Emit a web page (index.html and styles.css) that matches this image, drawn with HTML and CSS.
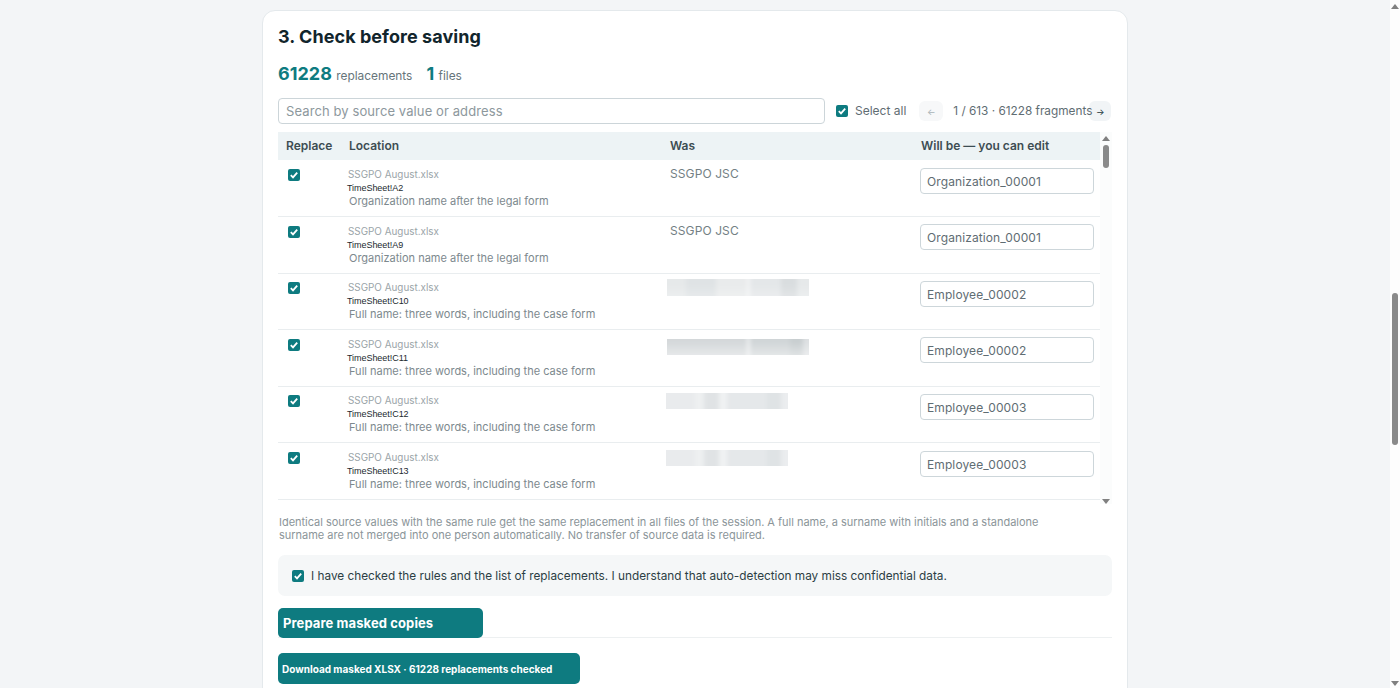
FILE: index.html
```html
<!DOCTYPE html>
<html lang="en">
<head>
<meta charset="utf-8">
<title>Check before saving</title>
<link rel="stylesheet" href="styles.css">
</head>
<body>
<div class="page">
  <main class="content">
    <section class="card">
      <h2 class="title">3. Check before saving</h2>
      <div class="stats">
        <span class="stat"><b>61228</b> replacements</span>
        <span class="stat"><b>1</b> files</span>
      </div>
      <div class="toolbar">
        <div class="search">Search by source value or address</div>
        <label class="select-all"><span class="check"><svg viewBox="0 0 12 12"><path d="M2.8 6.2 5 8.4 9.2 3.6"/></svg></span><span class="select-text">Select all</span></label>
        <div class="pager">
          <span class="page-btn muted">←</span>
          <span class="page-info">1 / 613 · 61228 fragments</span>
          <span class="page-btn next">→</span>
        </div>
      </div>
      <div class="table-wrap">
        <div class="table">
          <div class="row head">
            <span>Replace</span><span>Location</span><span>Was</span><span>Will be — you can edit</span>
          </div>
          <div class="row">
            <span class="check"><svg viewBox="0 0 12 12"><path d="M2.8 6.2 5 8.4 9.2 3.6"/></svg></span>
            <div class="loc"><div class="file">SSGPO August.xlsx</div><div class="addr">TimeSheet!A2</div><div class="desc">Organization name after the legal form</div></div>
            <div class="was">SSGPO JSC</div>
            <div class="value">Organization_00001</div>
          </div>
          <div class="row">
            <span class="check"><svg viewBox="0 0 12 12"><path d="M2.8 6.2 5 8.4 9.2 3.6"/></svg></span>
            <div class="loc"><div class="file">SSGPO August.xlsx</div><div class="addr">TimeSheet!A9</div><div class="desc">Organization name after the legal form</div></div>
            <div class="was">SSGPO JSC</div>
            <div class="value">Organization_00001</div>
          </div>
          <div class="row">
            <span class="check"><svg viewBox="0 0 12 12"><path d="M2.8 6.2 5 8.4 9.2 3.6"/></svg></span>
            <div class="loc"><div class="file">SSGPO August.xlsx</div><div class="addr">TimeSheet!C10</div><div class="desc">Full name: three words, including the case form</div></div>
            <div class="blur long"></div>
            <div class="value">Employee_00002</div>
          </div>
          <div class="row">
            <span class="check"><svg viewBox="0 0 12 12"><path d="M2.8 6.2 5 8.4 9.2 3.6"/></svg></span>
            <div class="loc"><div class="file">SSGPO August.xlsx</div><div class="addr">TimeSheet!C11</div><div class="desc">Full name: three words, including the case form</div></div>
            <div class="blur long dark"></div>
            <div class="value">Employee_00002</div>
          </div>
          <div class="row">
            <span class="check"><svg viewBox="0 0 12 12"><path d="M2.8 6.2 5 8.4 9.2 3.6"/></svg></span>
            <div class="loc"><div class="file">SSGPO August.xlsx</div><div class="addr">TimeSheet!C12</div><div class="desc">Full name: three words, including the case form</div></div>
            <div class="blur short"></div>
            <div class="value">Employee_00003</div>
          </div>
          <div class="row">
            <span class="check"><svg viewBox="0 0 12 12"><path d="M2.8 6.2 5 8.4 9.2 3.6"/></svg></span>
            <div class="loc"><div class="file">SSGPO August.xlsx</div><div class="addr">TimeSheet!C13</div><div class="desc">Full name: three words, including the case form</div></div>
            <div class="blur short"></div>
            <div class="value">Employee_00003</div>
          </div>
        </div>
        <div class="scrollbar inner">
          <span class="arrow up"></span>
          <span class="thumb"></span>
          <span class="arrow down"></span>
        </div>
      </div>
      <p class="note">Identical source values with the same rule get the same replacement in all files of the session. A full name, a surname with initials and a standalone surname are not merged into one person automatically. No transfer of source data is required.</p>
      <label class="consent"><span class="check"><svg viewBox="0 0 12 12"><path d="M2.8 6.2 5 8.4 9.2 3.6"/></svg></span>I have checked the rules and the list of replacements. I understand that auto-detection may miss confidential data.</label>
      <div class="prepare-row"><button class="btn prepare">Prepare masked copies</button></div>
      <button class="btn download">Download masked XLSX · 61228 replacements checked</button>
    </section>
  </main>
  <div class="scrollbar outer">
    <span class="arrow up"></span>
    <span class="thumb"></span>
    <span class="arrow down"></span>
  </div>
</div>
</body>
</html>
```
FILE: styles.css
```css
* { box-sizing: border-box; }
html, body { margin: 0; height: 100%; overflow: hidden; }
body { font-family: Inter, "Liberation Sans", sans-serif; color: #15262c; background: #f3f5f7; }
.page { display: flex; height: 688px; overflow: hidden; }
.content { flex: 1; min-width: 0; padding-top: 10px; }
.card {
  width: 866px; margin: 0 auto; height: 720px; background: #fff;
  border: 1px solid #e4e9ec; border-radius: 13px; padding: 0 15px;
}
.title { margin: 0; padding-top: 14px; font-size: 18px; line-height: 24px; font-weight: 700; letter-spacing: .05px; color: #11252c; }
.stats { display: flex; gap: 14px; margin-top: 14px; height: 24px; align-items: baseline; font-size: 11.9px; color: #66757b; }
.stat b { font-size: 18px; font-weight: 700; color: #0e7b80; margin-right: 1px; }
.toolbar { display: flex; align-items: center; height: 26px; margin-top: 11px; }
.search {
  width: 547px; height: 26px; border: 1px solid #ccd5d9; border-radius: 4px;
  padding: 0 7px; font-size: 13px; line-height: 25px; letter-spacing: .1px; color: #8d989d;
}
.check { display: block; width: 12px; height: 12px; border-radius: 2px; background: #0e7b80; flex: none; }
.check svg { display: block; width: 12px; height: 12px; fill: none; stroke: #fff; stroke-width: 1.8; }
.select-all { display: flex; align-items: center; gap: 7px; margin-left: 11px; font-size: 12px; color: #5f6d73; }
.select-text { margin-top: -2px; }
.pager { display: flex; align-items: center; margin-left: 13px; font-size: 11.8px; color: #5f6d73; }
.page-btn { display: flex; align-items: center; justify-content: center; height: 20px; border-radius: 6px; background: #f1f4f6; font-size: 9px; color: #20343a; }
.page-btn.muted { width: 24px; color: #a9b3b7; background: #f7f8f9; }
.page-info { margin-left: 9px; width: 137px; padding-left: 1px; white-space: nowrap; position: relative; z-index: 1; }
.page-btn.next { width: 22px; }
.table-wrap { display: flex; height: 372px; margin-top: 8px; }
.table { flex: 1; min-width: 0; }
.row {
  display: grid; grid-template-columns: 63px 321px 251px 174px;
  height: 56.6px; padding-left: 8px; border-bottom: 1px solid #e9edef;
  padding-top: 8.6px; font-size: 12px;
}
.row.head {
  height: 28.4px; padding-top: 0; padding-bottom: 2px; align-items: center; background: #edf3f5; border: 0;
  font-weight: 600; font-size: 12px; color: #3d4d53;
}
.row > .check { margin-left: 2px; }
.loc { margin-left: -1px; margin-top: -1px; }
.file { font-size: 9.9px; line-height: 13px; color: #9aa4a8; }
.addr { font-size: 9px; line-height: 14px; color: #1c2a30; font-family: "Liberation Sans", sans-serif; letter-spacing: -.05px; margin-left: -1px; }
.desc { font-size: 11px; line-height: 13px; color: #7d898e; margin-left: 1px; }
.was { font-size: 12px; line-height: 12px; color: #737f84; letter-spacing: .1px; margin-top: -1px; }
.value {
  height: 26px; width: 174px; margin-left: -1px; margin-top: -1.4px; border: 1px solid #cdd6da; border-radius: 4px;
  padding: 0 6px; font-size: 12px; line-height: 25px; color: #5f6d73; letter-spacing: .1px;
}
.blur { position: relative; overflow: hidden; height: 17px; margin-left: -3px; margin-top: -3px; }
.blur::before { content: ""; position: absolute; inset: -6px; filter: blur(2px); }
.blur.long { width: 142px; }
.blur.long::before {
  background:
    linear-gradient(180deg, rgba(255,255,255,0) 40%, rgba(255,255,255,.35) 100%),
    linear-gradient(90deg, #e6e9ea 0 16%, #dfe3e5 16% 36%, #e9ebec 36% 56%, #f4f5f6 56% 58%, #e4e7e9 58% 78%, #d9dddf 78% 88%, #e6e9ea 88%);
}
.blur.long.dark { height: 16px; margin-top: 0; }
.blur.long.dark::before {
  background:
    linear-gradient(180deg, rgba(255,255,255,0) 30%, rgba(255,255,255,.6) 100%),
    linear-gradient(90deg, #d4d8da 0 56%, #eff1f2 56% 58%, #d0d5d7 58% 84%, #c8ced0 84% 92%, #dde0e2 92%);
}
.blur.short { width: 122px; height: 16px; margin-left: -4px; margin-top: -2px; }
.blur.short::before {
  background: linear-gradient(90deg, #e9ebed 0 26%, #eef0f1 26% 33%, #e0e3e5 33% 44%, #f0f2f3 44% 50%, #e5e8ea 50% 80%, #dfe3e5 80% 90%, #ebedef 90%);
}
.scrollbar { display: flex; flex-direction: column; align-items: center; flex: none; }
.scrollbar.inner { width: 12px; height: 372px; background: #fbfcfc; }
.scrollbar.outer { width: 10px; height: 688px; background: #fdfdfd; }
.arrow { width: 0; height: 0; border-left: 4px solid transparent; border-right: 4px solid transparent; flex: none; }
.arrow.up { border-bottom: 5px solid #808080; margin-top: 4px; }
.arrow.down { border-top: 5px solid #808080; margin-top: auto; }
.thumb { background: #8a8a8a; border-radius: 3px; width: 6px; flex: none; }
.inner .thumb { height: 23px; margin-top: 4px; }
.outer .thumb { height: 152px; margin-top: 284px; }
.outer .arrow.down { margin-bottom: 2px; }
.note { margin: 12px 60px 0 1px; font-size: 11px; line-height: 13px; color: #8b9599; letter-spacing: -.02px; }
.consent {
  display: flex; align-items: center; gap: 7px; height: 41px; margin-top: 13px; padding-left: 14px;
  background: #f5f7f8; border-radius: 7px; font-size: 11.8px; color: #2c3e44;
}
.prepare-row { margin-top: 12px; border-bottom: 1px solid #edf0f1; height: 30px; display: flex; }
.btn { display: block; border: 0; background: #0e7b80; color: #fff; font-family: inherit; font-weight: 700; text-align: left; border-radius: 5px; cursor: pointer; }
.prepare { width: 205px; height: 30px; padding: 0 5px; font-size: 13px; letter-spacing: .1px; flex: none; }
.download { width: 302px; height: 31px; margin-top: 15px; padding: 0 4px; font-size: 10px; }
```
